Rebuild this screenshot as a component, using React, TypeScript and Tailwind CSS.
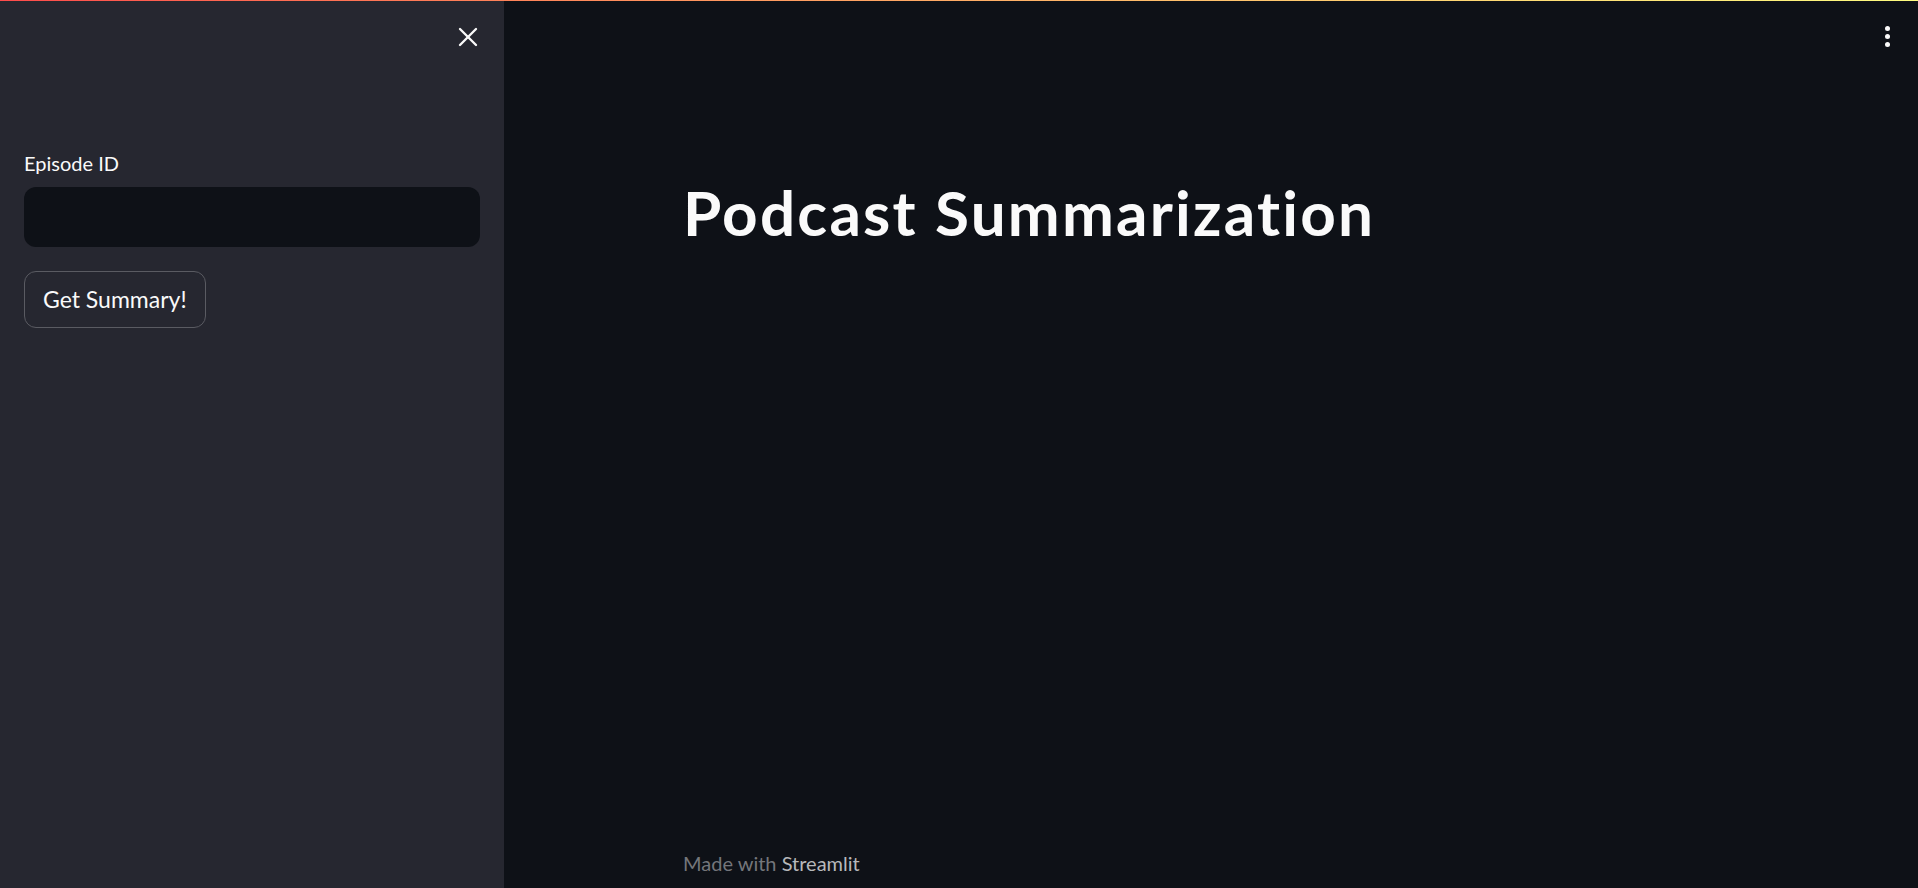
import { X } from 'lucide-react'

// Streamlit-style page: sidebar with input + button, main area with title and footer
export default function App() {
  return (
    <div className="relative flex h-[888px] w-full overflow-hidden bg-[#0e1117] font-['Lato',sans-serif] text-[#fafafa]">
      {/* barra decorativa in alto */}
      <div className="absolute left-0 right-0 top-0 h-px bg-gradient-to-r from-[#ff4b4b] to-[#fffd80]" />

      {/* sidebar */}
      <aside className="flex w-[504px] shrink-0 flex-col bg-[#262730] px-6">
        <div className="-mr-[4px] flex justify-end pt-[21px]">
          <X className="h-[32px] w-[32px] text-[#fafafa]" strokeWidth={1.75} />
        </div>

        <label className="mt-[98px] text-[20px] leading-[24px]">Episode ID</label>
        <div className="mt-[12px] h-[60px] w-full rounded-[12px] bg-[#0e1117]" />

        <div className="mt-[24px]">
          <button className="h-[57px] rounded-[12px] border border-[#5a5b62] bg-[#262730] px-[18px] text-[23px] text-[#fafafa]">
            Get Summary!
          </button>
        </div>
      </aside>

      {/* contenuto principale */}
      <main className="relative flex flex-1 flex-col items-center">
        <div className="absolute right-[28px] top-[26px] flex flex-col gap-[3px]">
          <span className="h-[5px] w-[5px] rounded-full bg-[#fafafa]" />
          <span className="h-[5px] w-[5px] rounded-full bg-[#fafafa]" />
          <span className="h-[5px] w-[5px] rounded-full bg-[#fafafa]" />
        </div>

        <div className="flex w-[1104px] flex-1 flex-col px-6">
          <h1 className="mt-[172px] text-[62px] font-bold leading-[80px] tracking-[2.2px]">
            Podcast Summarization
          </h1>
          <div className="flex-1" />
          <p className="pb-[10px] text-[20px] leading-[30px] text-[#74767b]">
            Made with <span className="text-[#b7b8bb]">Streamlit</span>
          </p>
        </div>
      </main>
    </div>
  )
}
